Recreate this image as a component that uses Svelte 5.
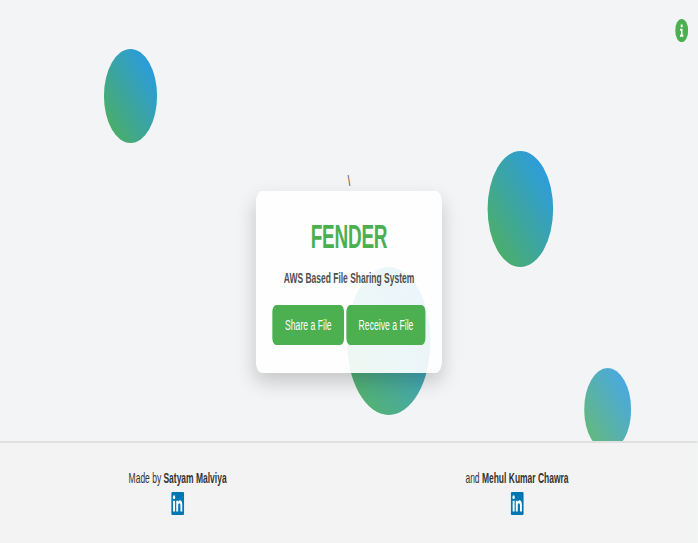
<script>
  const circles = [
    { left: 183.5, top: 48.5, size: 94.5, opacity: 0.98 },
    { left: 863, top: 151, size: 116, opacity: 0.97 },
    { left: 614, top: 266.5, size: 148, opacity: 0.92 },
    { left: 1033.5, top: 367.5, size: 83, opacity: 0.83 }
  ];
  const authors = [
    { lead: 'Made by', name: 'Satyam Malviya' },
    { lead: 'and', name: 'Mehul Kumar Chawra' }
  ];
</script>

<div class="viewport">
  <div class="page">
    {#each circles as c}
      <div
        class="circle"
        style="left:{c.left}px;top:{c.top}px;width:{c.size}px;height:{c.size}px;opacity:{c.opacity}"
      ></div>
    {/each}

    <button class="info" aria-label="Info">
      <svg viewBox="0 0 24 24" width="23" height="23">
        <circle cx="12" cy="12" r="12" fill="#4caf50" />
        <path d="M10.3 5.8h3.4v2.8h-3.4zM9 10.3h4.6v6.2h1.5v1.9H8.9v-1.9h1.8v-4.3H9z" fill="#fff" />
      </svg>
    </button>

    <main>
      <div class="slash">\</div>
      <section class="card">
        <h1>FENDER</h1>
        <p class="tagline">AWS Based File Sharing System</p>
        <div class="actions">
          <button class="btn share">Share a File</button>
          <button class="btn receive">Receive a File</button>
        </div>
      </section>
    </main>

    <footer>
      {#each authors as a}
        <div class="author">
          <p>{a.lead} <strong>{a.name}</strong></p>
          <svg viewBox="0 0 24 24" width="23" height="23">
            <rect width="24" height="24" rx="1.8" fill="#0077b5" />
            <g fill="#fff">
              <circle cx="5.3" cy="5.4" r="2.1" />
              <path d="M3.5 9h3.6v11.3H3.5z" />
              <path d="M9.3 9h3.4v1.6c.6-1.1 1.8-1.9 3.5-1.9 3.6 0 4.3 2.3 4.3 5.4v6.2H17v-5.5c0-1.4 0-3-1.9-3s-2.2 1.4-2.2 3v5.5H9.3z" />
            </g>
          </svg>
        </div>
      {/each}
    </footer>
  </div>
</div>

<style>
  :global(body) {
    margin: 0;
    background: #f3f4f6;
  }
  .viewport {
    width: 698px;
    height: 543px;
    overflow: hidden;
  }
  .page {
    position: relative;
    display: flex;
    flex-direction: column;
    width: 1235.4px;
    height: 543px;
    overflow: hidden;
    transform: scaleX(0.565);
    transform-origin: 0 0;
    background: #f3f4f6;
    color: #333;
    font-family: "Liberation Sans", Arial, sans-serif;
  }
  .circle {
    position: absolute;
    border-radius: 50%;
    background: linear-gradient(45deg, #4caf50, #2196f3);
  }
  .info {
    position: absolute;
    top: 18.5px;
    right: 17px;
    padding: 0;
    border: 0;
    background: none;
    line-height: 0;
  }
  main {
    position: relative;
    flex: 1;
    display: flex;
    flex-direction: column;
    align-items: center;
    padding-top: 171px;
    box-sizing: border-box;
  }
  .slash {
    height: 20px;
    line-height: 19px;
    font-size: 15.5px;
  }
  .card {
    box-sizing: border-box;
    width: 329px;
    height: 182px;
    padding-top: 26px;
    border-radius: 11px;
    background: rgba(255, 255, 255, 0.9);
    box-shadow: 0 9px 26px rgba(0, 0, 0, 0.19);
    text-align: center;
  }
  h1 {
    margin: 0;
    color: #4caf50;
    font-size: 33.5px;
    font-weight: 700;
    line-height: 40px;
    letter-spacing: -0.4px;
  }
  .tagline {
    margin: 11px 0 0;
    font-size: 15px;
    line-height: 20px;
    font-weight: 700;
    color: #4f4f4f;
  }
  .actions {
    display: flex;
    justify-content: center;
    gap: 4px;
    margin-top: 17px;
  }
  .btn {
    height: 40px;
    padding: 0 0 1px;
    border: 0;
    border-radius: 7px;
    background: #4caf50;
    color: #fff;
    font: 15.3px "Liberation Sans", Arial, sans-serif;
  }
  .share {
    width: 127px;
  }
  .receive {
    width: 140px;
  }
  footer {
    position: relative;
    display: grid;
    grid-template-columns: 1fr 1fr;
    box-sizing: border-box;
    height: 102px;
    padding: 25px 20px 0 14px;
    border-top: 2px solid #e0e0e0;
    background: #f3f3f3;
  }
  .author {
    display: flex;
    flex-direction: column;
    align-items: center;
  }
  .author p {
    margin: 0 0 4.5px;
    font-size: 15px;
    line-height: 19px;
  }
</style>
